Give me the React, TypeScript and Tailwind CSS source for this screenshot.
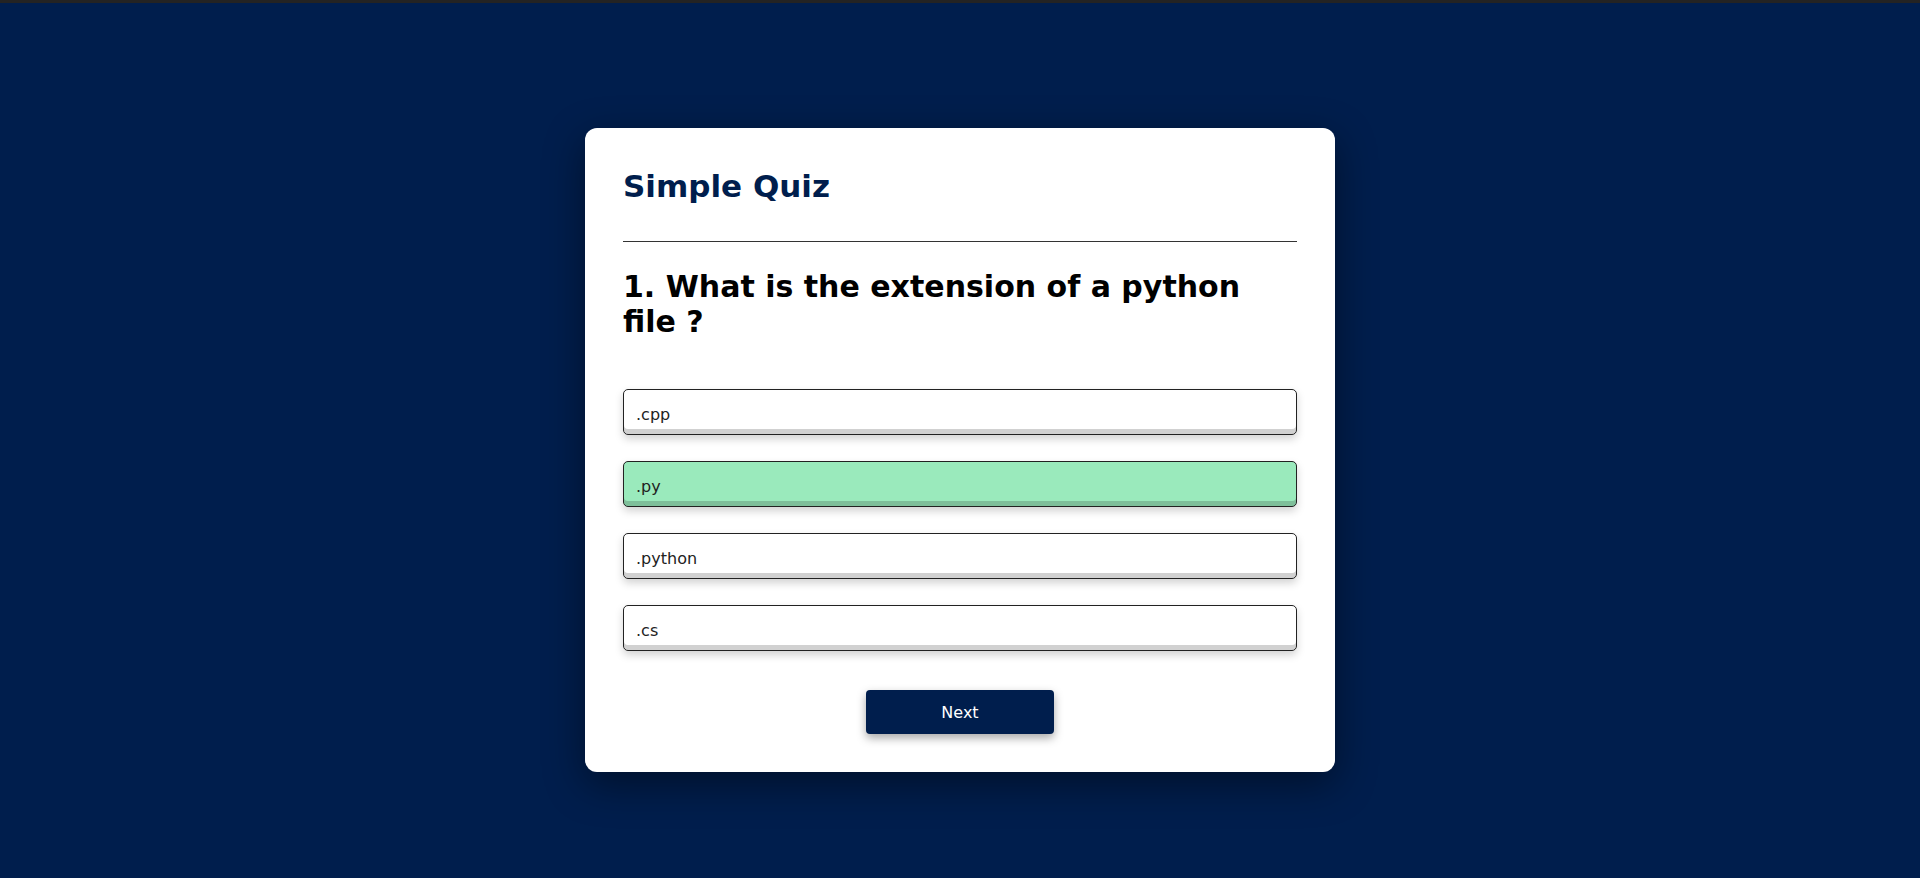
import React from "react";

const options = [
  { label: ".cpp", correct: false },
  { label: ".py", correct: true },
  { label: ".python", correct: false },
  { label: ".cs", correct: false },
];

const App: React.FC = () => {
  return (
    <div className="min-h-screen w-full bg-[#001e4d] font-['DejaVu_Sans',Verdana,sans-serif]">
      {/* top strip */}
      <div className="h-[3px] w-full bg-[#232323]" />

      {/* Quiz card */}
      <div className="mx-auto mt-[125px] w-[750px] rounded-[12px] bg-white px-[38px] pt-[40px] pb-[38px] shadow-[0_12px_40px_rgba(0,0,0,0.45)]">
        <h1 className="border-b border-[#333] pb-[37px] text-[31px] leading-[36px] font-bold text-[#001e4d]">
          Simple Quiz
        </h1>

        <h2 className="mt-[27px] max-w-[640px] text-[30px] leading-[35px] font-bold text-black">
          1. What is the extension of a python file ?
        </h2>

        {/* Answers */}
        <div className="mt-[50px] flex flex-col gap-[26px]">
          {options.map((opt) => (
            <button
              key={opt.label}
              className={
                opt.correct
                  ? "flex h-[46px] w-full items-center rounded-[5px] border border-[#222] bg-[#9aeabc] pt-[4px] pl-[12px] text-left text-[16px] leading-[19px] text-[#222] shadow-[inset_0_-5px_0_rgba(0,0,0,0.18),0_4px_8px_rgba(0,0,0,0.18)]"
                  : "flex h-[46px] w-full items-center rounded-[5px] border border-[#222] bg-white pt-[4px] pl-[12px] text-left text-[16px] leading-[19px] text-[#222] shadow-[inset_0_-5px_0_rgba(0,0,0,0.18),0_4px_8px_rgba(0,0,0,0.18)]"
              }
            >
              {opt.label}
            </button>
          ))}
        </div>

        <button className="mx-auto mt-[39px] flex h-[44px] w-[188px] items-center justify-center rounded-[4px] bg-[#001e4d] text-[16px] leading-[19px] text-white shadow-[0_4px_10px_rgba(0,0,0,0.35)]">
          Next
        </button>
      </div>
    </div>
  );
};

export default App;
